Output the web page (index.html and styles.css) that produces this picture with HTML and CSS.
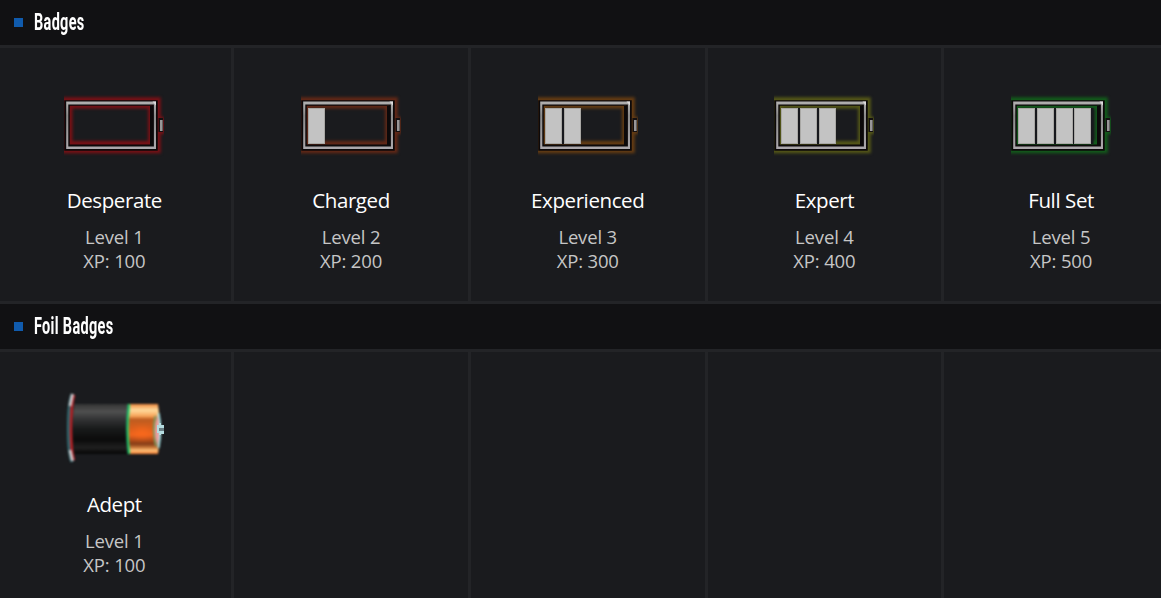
FILE: index.html
```html
<!DOCTYPE html>
<html lang="en">
<head>
    <meta charset="UTF-8">
    <title>Badges</title>
    <link rel="stylesheet" href="styles.css">
</head>
<body>

    <svg class="defs" width="0" height="0">
        <defs>
            <filter id="glow" x="-20%" y="-30%" width="140%" height="160%" color-interpolation-filters="sRGB">
                <feGaussianBlur stdDeviation="1.4"/>
            </filter>
            <filter id="edge" color-interpolation-filters="sRGB">
                <feGaussianBlur stdDeviation="0.4"/>
            </filter>
            <filter id="soft" color-interpolation-filters="sRGB">
                <feGaussianBlur stdDeviation="0.8"/>
            </filter>
            <filter id="shine" x="-50%" y="-50%" width="200%" height="200%" color-interpolation-filters="sRGB">
                <feGaussianBlur stdDeviation="3"/>
            </filter>
            <linearGradient id="frame" x1="0" y1="0" x2="0" y2="1">
                <stop offset="0" stop-color="#b2b1b1"/>
                <stop offset="0.3" stop-color="#8c8c8c"/>
                <stop offset="1" stop-color="#aca8ac"/>
            </linearGradient>
            <linearGradient id="black" x1="0" y1="0" x2="0" y2="1">
                <stop offset="0" stop-color="#343434"/>
                <stop offset="0.15" stop-color="#505050"/>
                <stop offset="0.32" stop-color="#303132"/>
                <stop offset="0.5" stop-color="#181a1a"/>
                <stop offset="0.72" stop-color="#0b0b0b"/>
                <stop offset="0.87" stop-color="#202020"/>
                <stop offset="1" stop-color="#050505"/>
            </linearGradient>
            <linearGradient id="copper" x1="0" y1="0" x2="0" y2="1">
                <stop offset="0" stop-color="#ed863c"/>
                <stop offset="0.12" stop-color="#ffdc9e"/>
                <stop offset="0.24" stop-color="#f8a65b"/>
                <stop offset="0.31" stop-color="#bd5c20"/>
                <stop offset="0.5" stop-color="#dc601c"/>
                <stop offset="0.62" stop-color="#f0651e"/>
                <stop offset="0.8" stop-color="#833b16"/>
                <stop offset="0.87" stop-color="#ca7839"/>
                <stop offset="0.93" stop-color="#ffc17a"/>
                <stop offset="1" stop-color="#ef7529"/>
            </linearGradient>
            <g id="battery">
                <g filter="url(#glow)">
                    <rect x="1" y="14.5" width="92.5" height="49.5" fill="none" stroke="currentColor" stroke-width="6.5"/>
                    <rect x="6" y="20" width="80.5" height="37.5" fill="none" stroke="currentColor" stroke-width="5"/>
                    <rect x="94" y="31" width="6.5" height="17" fill="currentColor"/>
                </g>
                <g filter="url(#edge)">
                    <rect x="3" y="17" width="88" height="45" fill="none" stroke="#0c090a" stroke-width="5.5"/>
                    <path d="M87.5 20v40M4 60h84" stroke="#0c090a" stroke-width="3"/>
                    <path fill="url(#frame)" fill-rule="evenodd" d="M2.2 15.4h89.8v47.6h-89.8zM4.3 18.4v42h85.6v-42z"/>
                    <path d="M88.5 15.5h3.5v4z" fill="#dddbdc"/>
                    <rect x="94.5" y="32" width="4.5" height="14" fill="#141011"/>
                    <rect x="96" y="34" width="2.6" height="11" fill="#999798"/>
                </g>
            </g>
            <rect id="cell" x="7.5" y="22.5" width="16" height="35" fill="#c3c3c3" stroke="#a9a8a5"/>
        </defs>
    </svg>

    <h2 class="section-title"><span>Badges</span></h2>
    <div class="badge-grid">
        <div class="badge level-1">
            <svg class="icon" viewBox="0 0 100 80"><use href="#battery"/></svg>
            <div class="name">Desperate</div>
            <div class="info">Level 1<br>XP: 100</div>
        </div>
        <div class="badge level-2">
            <svg class="icon" viewBox="0 0 100 80">
                <use href="#battery"/>
                <use href="#cell"/>
            </svg>
            <div class="name">Charged</div>
            <div class="info">Level 2<br>XP: 200</div>
        </div>
        <div class="badge level-3">
            <svg class="icon" viewBox="0 0 100 80">
                <use href="#battery"/>
                <path class="gap" d="M25 22v36"/>
                <use href="#cell"/>
                <use href="#cell" x="19"/>
            </svg>
            <div class="name">Experienced</div>
            <div class="info">Level 3<br>XP: 300</div>
        </div>
        <div class="badge level-4">
            <svg class="icon" viewBox="0 0 100 80">
                <use href="#battery"/>
                <path class="gap" d="M25 22v36M44 22v36"/>
                <use href="#cell"/>
                <use href="#cell" x="19"/>
                <use href="#cell" x="38"/>
            </svg>
            <div class="name">Expert</div>
            <div class="info">Level 4<br>XP: 400</div>
        </div>
        <div class="badge level-5">
            <svg class="icon" viewBox="0 0 100 80">
                <use href="#battery"/>
                <path class="gap" d="M25 22v36M44 22v36M63 22v36M81 22v36"/>
                <use href="#cell"/>
                <use href="#cell" x="19"/>
                <use href="#cell" x="38"/>
                <use href="#cell" x="56"/>
            </svg>
            <div class="name">Full Set</div>
            <div class="info">Level 5<br>XP: 500</div>
        </div>
    </div>

    <h2 class="section-title"><span>Foil Badges</span></h2>
    <div class="badge-grid">
        <div class="badge">
            <svg class="icon" viewBox="0 0 100 80">
                <g filter="url(#soft)">
                    <path d="M8 4C3 15 3 62 8 72" fill="none" stroke="#347078" stroke-width="2.5"/>
                    <path d="M10 5C6 18 6 60 10 70" fill="none" stroke="#c61f24" stroke-width="2.5"/>
                    <path d="M8.5 4L6 16M6 60L8.5 71" stroke="#c8c5c8" stroke-width="3"/>
                    <path d="M10 14H64V64H10Q7 39 10 14z" fill="url(#black)"/>
                    <path d="M64 14H94Q98 39 94 64H64z" fill="url(#copper)"/>
                    <ellipse cx="78" cy="43" rx="8" ry="5" fill="#ff6b1c" opacity="0.7" filter="url(#shine)"/>
                    <path d="M65 14Q62 39 65 64" fill="none" stroke="#20c86c" stroke-width="2.4"/>
                    <path d="M91.5 26Q88 40 92 56" fill="none" stroke="#769b60" stroke-width="2"/>
                    <path d="M93.5 25Q98 39 93.5 56Q88 41 93.5 25z" fill="#ee9c9c"/>
                    <path d="M94.5 23Q98 39 94.5 58" fill="none" stroke="#a4e6e8" stroke-width="2"/>
                </g>
                <g filter="url(#edge)">
                    <path d="M93 35h2v-2h2v2h3v9h-3v1h-2v-2h-2z" fill="#b5dce0"/>
                    <path d="M95 38h5v3h-5z" fill="#697e84"/>
                </g>
            </svg>
            <div class="name">Adept</div>
            <div class="info">Level 1<br>XP: 100</div>
        </div>
        <div class="badge"></div>
        <div class="badge"></div>
        <div class="badge"></div>
        <div class="badge"></div>
    </div>

</body>
</html>
```
FILE: styles.css
```css
body {
    margin: 0;
    height: 598px;
    overflow: hidden;
    background-color: #1a1b1e;
    font-family: "Open Sans", "Noto Sans", sans-serif;
}

.defs {
    display: block;
}

.section-title {
    display: flex;
    align-items: center;
    height: 45px;
    margin: 0;
    padding-left: 14px;
    background-color: #111113;
    border-bottom: 3px solid #232427;
    color: #fff;
    font: bold 23px/45px Roboto, sans-serif;
}

.section-title::before {
    content: "";
    width: 9px;
    height: 9px;
    margin: 0 10.5px 1px 0;
    background-color: #105bad;
}

.section-title span {
    transform: scaleX(0.63);
    transform-origin: left;
    letter-spacing: 0.5px;
    white-space: nowrap;
}

.badge-grid {
    display: grid;
    grid-template-columns: repeat(5, 236.7px);
    width: 1183.5px;
    height: 253px;
    margin-left: -2.5px;
    border-bottom: 3px solid #232427;
}

.badge {
    box-sizing: border-box;
    padding-top: 38px;
    border-right: 3px solid #232427;
    text-align: center;
}

.icon {
    display: block;
    width: 100px;
    height: 80px;
    margin: 0 auto;
}

.name {
    margin-top: 19px;
    color: #fff;
    font-size: 20.5px;
    font-weight: 500;
    line-height: 30px;
    letter-spacing: -0.4px;
}

.info {
    margin-top: 10px;
    color: #c6c6c6;
    font-size: 18.5px;
    line-height: 24px;
    letter-spacing: -0.15px;
}

.gap {
    stroke: #17181d;
    stroke-width: 3;
}

.level-1 { color: #791015; }
.level-2 { color: #632816; }
.level-3 { color: #653c12; }
.level-4 { color: #555817; }
.level-5 { color: #125c1b; }
```
